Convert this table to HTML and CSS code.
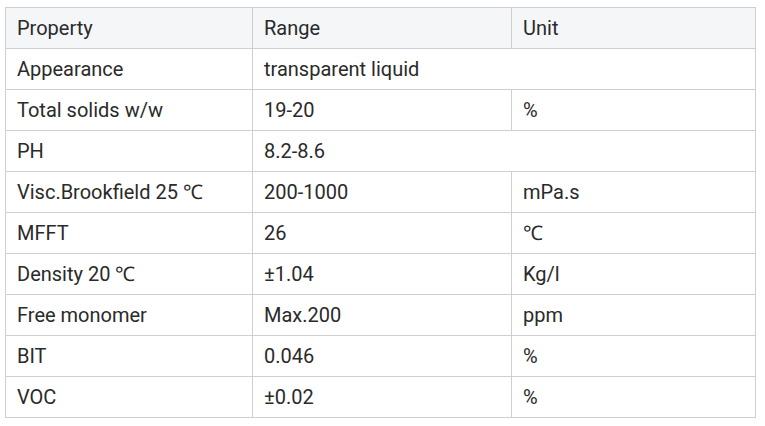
FILE: index.html
```html
<!DOCTYPE html>
<html>
<head>
<meta charset="utf-8">
<link rel="stylesheet" href="styles.css">
</head>
<body>
<div class="wrap">
<table class="spec">
<colgroup><col class="c1"><col class="c2"><col class="c3"></colgroup>
<thead>
<tr><th>Property</th><th>Range</th><th>Unit</th></tr>
</thead>
<tbody>
<tr><td>Appearance</td><td colspan="2">transparent liquid</td></tr>
<tr><td>Total solids w/w</td><td>19-20</td><td>%</td></tr>
<tr><td>PH</td><td colspan="2">8.2-8.6</td></tr>
<tr><td>Visc.Brookfield 25 ℃</td><td>200-1000</td><td>mPa.s</td></tr>
<tr><td>MFFT</td><td>26</td><td>℃</td></tr>
<tr><td>Density 20 ℃</td><td>±1.04</td><td>Kg/l</td></tr>
<tr><td>Free monomer</td><td>Max.200</td><td>ppm</td></tr>
<tr><td>BIT</td><td>0.046</td><td>%</td></tr>
<tr><td>VOC</td><td>±0.02</td><td>%</td></tr>
</tbody>
</table>
</div>
</body>
</html>
```
FILE: styles.css
```css
html, body { margin: 0; padding: 0; background: #fff; }
.wrap { padding: 7px 0 0 5px; }
.spec {
  border-collapse: collapse;
  table-layout: fixed;
  width: 750px;
  font-family: Roboto, "Liberation Sans", sans-serif;
  font-size: 20px;
  color: #2a2a2a;
}
.c1 { width: 247px; }
.c2 { width: 259px; }
.c3 { width: 244px; }
.spec th, .spec td {
  border: 1px solid #cfcfcf;
  height: 41px;
  box-sizing: border-box;
  padding: 0 11px;
  text-align: left;
  font-weight: 400;
  vertical-align: middle;
  line-height: 22px;
}
.spec thead th { background: #f5f6f8; }
```
